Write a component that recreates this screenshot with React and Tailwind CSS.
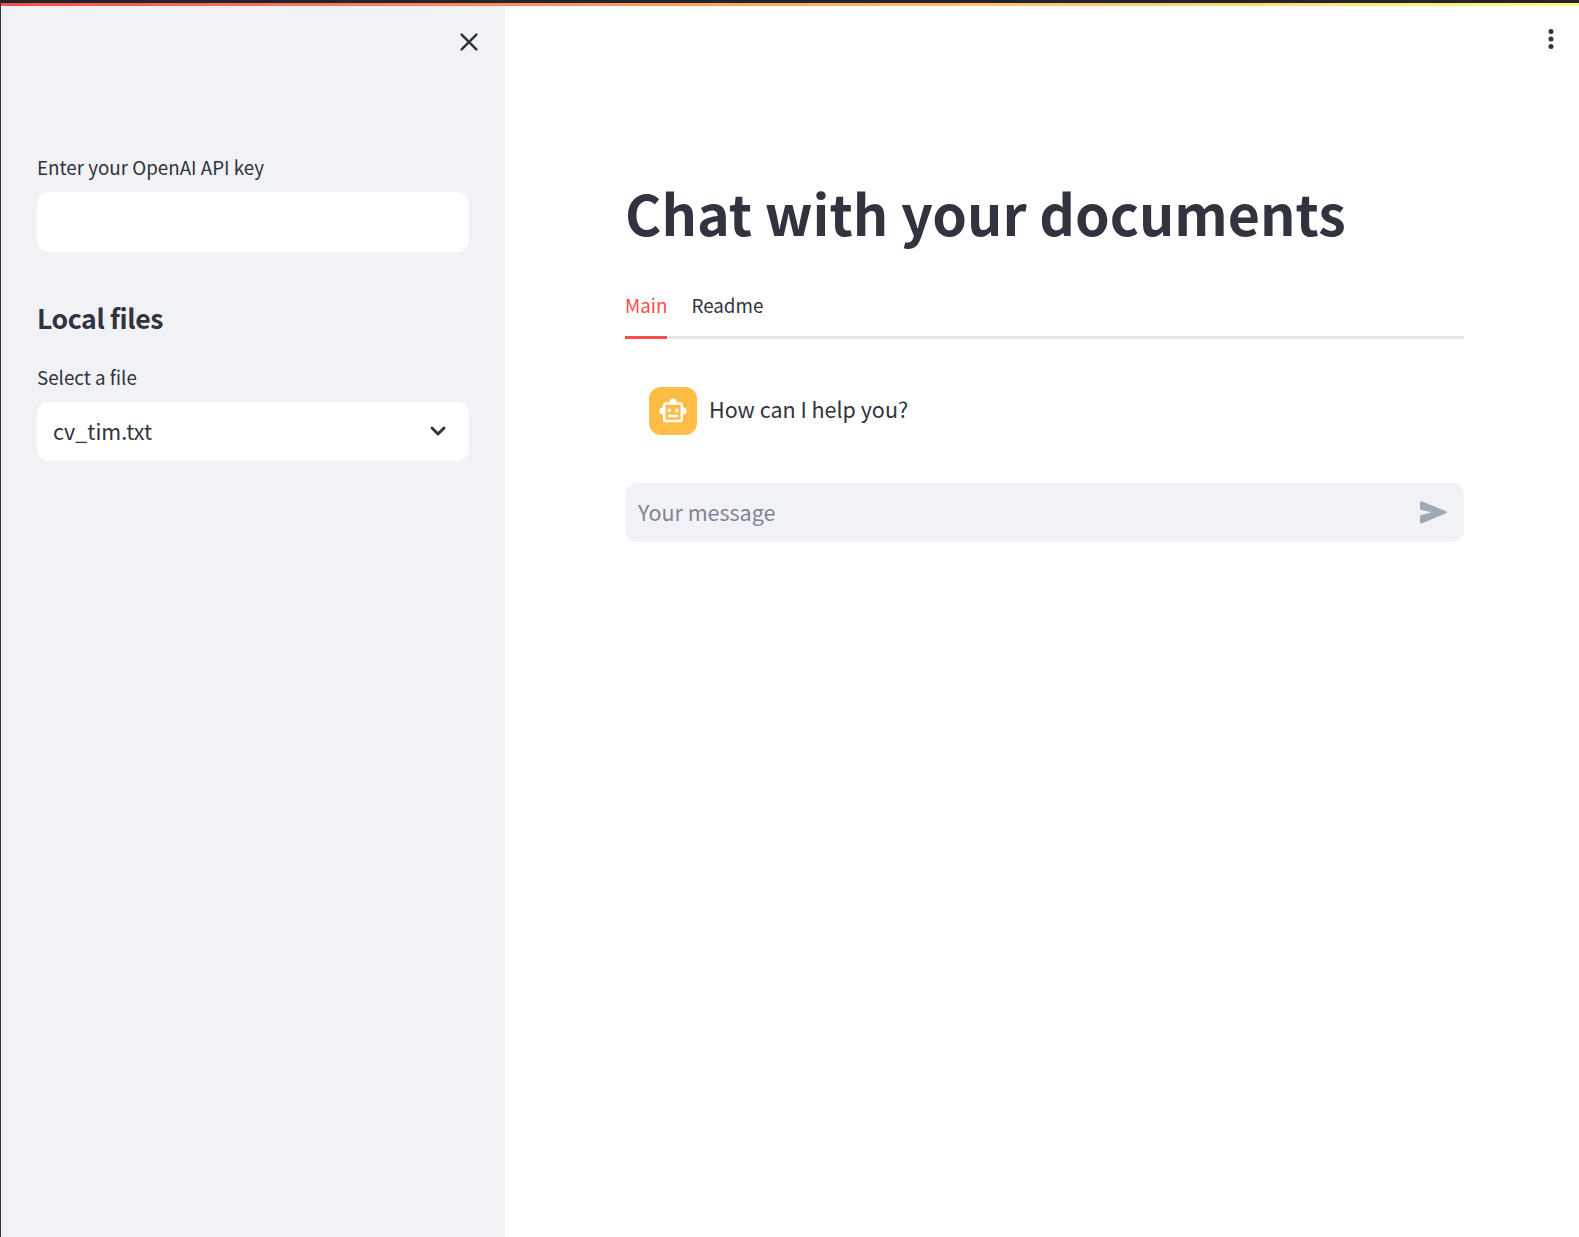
import React from "react";

const Close = () => (
  <svg width="30" height="30" viewBox="0 0 24 24" fill="none" stroke="#31333F" strokeWidth="2.1" strokeLinecap="round">
    <path d="M6.1 6.1l11.8 11.8M17.9 6.1L6.1 17.9" />
  </svg>
);

const Dots = () => (
  <svg width="30" height="30" viewBox="0 0 30 30" fill="#31333F">
    <circle cx="15" cy="7.4" r="2.5" />
    <circle cx="15" cy="15" r="2.5" />
    <circle cx="15" cy="22.5" r="2.5" />
  </svg>
);

const Chevron = () => (
  <svg width="24" height="24" viewBox="0 0 24 24" fill="none" stroke="#31333F" strokeWidth="2.9" strokeLinecap="round" strokeLinejoin="round">
    <path d="M6 9l6 6 6-6" />
  </svg>
);

const Robot = () => (
  <svg width="30" height="30" viewBox="0 0 24 24" fill="#fff">
    <path d="M20 9V7c0-1.1-.9-2-2-2h-3c0-1.66-1.34-3-3-3S9 3.34 9 5H6c-1.1 0-2 .9-2 2v2c-1.66 0-3 1.34-3 3s1.34 3 3 3v4c0 1.1.9 2 2 2h12c1.1 0 2-.9 2-2v-4c1.66 0 3-1.34 3-3s-1.34-3-3-3zm-2 10H6V7h12v12zM9 13c-.83 0-1.5-.67-1.5-1.5S8.17 10 9 10s1.5.67 1.5 1.5S9.83 13 9 13zm7.5-1.5c0 .83-.67 1.5-1.5 1.5s-1.5-.67-1.5-1.5.67-1.5 1.5-1.5 1.5.67 1.5 1.5zM8 15h8v2H8v-2z" />
  </svg>
);

const Send = () => (
  <svg width="27" height="23" viewBox="0 0 27 23" fill="#A3A8B8">
    <path d="M0 1.5Q0-.3 1.7.3L26 10.3Q27.8 11.300 26 12.300L1.700 22.400Q0 23 0 21.200V15.200Q0 14.200 1.200 13.900L11.500 11.300 1.200 8.900Q0 8.600 0 7.500z" />
  </svg>
);

export default function App() {
  return (
    <div className="flex h-[1237px] w-[1579px] flex-col overflow-hidden bg-white font-['Noto_Sans_CJK_SC',sans-serif] text-[#31333F]">
      <div className="h-[3px] shrink-0 bg-[#23252e]" />
      <div className="flex min-h-0 flex-1 border-l border-[#33353d]">
        <div className="flex min-w-0 flex-1 flex-col">
          <div className="h-[3px] shrink-0 bg-linear-to-r from-[#ff4b4b] to-[#fffd80]" />
          <div className="flex min-h-0 flex-1">
            <aside className="flex w-[504px] shrink-0 flex-col bg-[#F0F2F6] px-9">
              <button className="mt-[21px] -mr-[15px] self-end"><Close /></button>
              <label className="mt-[93px] text-[18.8px] leading-[34px]">Enter your OpenAI API key</label>
              <input className="mt-[8px] h-[60px] w-full rounded-xl bg-white outline-none" />
              <h2 className="mt-[46px] text-[26.6px] leading-[40px] font-semibold tracking-[-0.4px]">Local files</h2>
              <label className="mt-[22px] text-[18.8px] leading-[34px]">Select a file</label>
              <div className="mt-[8px] flex h-[59px] items-center justify-between rounded-xl bg-white pr-[19px] pb-[2px] pl-4">
                <span className="text-[21.5px] leading-[36px]">cv_tim.txt</span>
                <Chevron />
              </div>
            </aside>
            <main className="flex min-w-0 flex-1 flex-col">
              <div className="flex h-[66px] items-center justify-end pr-[13px]"><Dots /></div>
              <div className="ml-[120px] flex w-[839px] flex-col">
                <h1 className="mt-[100px] text-[55.5px] leading-[80px] font-bold whitespace-nowrap">Chat with your documents</h1>
                <div className="mt-[36px] flex h-[51px] gap-6 border-b-[3px] border-[#e8e8e9] text-[18.8px] leading-[34px]">
                  <button className="-mb-[3px] flex border-b-[3px] border-[#ff4b4b] text-[#ff4b4b]">Main</button>
                  <button className="flex">Readme</button>
                </div>
                <div className="mt-12 flex h-12 items-center pl-6">
                  <div className="flex size-12 items-center justify-center rounded-xl bg-[#FFBD45]"><Robot /></div>
                  <p className="mb-[4px] ml-3 text-[21.5px] leading-[36px]">How can I help you?</p>
                </div>
                <div className="mt-12 flex h-[59px] items-center justify-between rounded-xl bg-[#F0F2F6] pr-[17px] pb-px pl-[13px]">
                  <span className="mb-px text-[21.5px] leading-[36px] text-[#808495]">Your message</span>
                  <Send />
                </div>
              </div>
            </main>
          </div>
        </div>
      </div>
    </div>
  );
}
